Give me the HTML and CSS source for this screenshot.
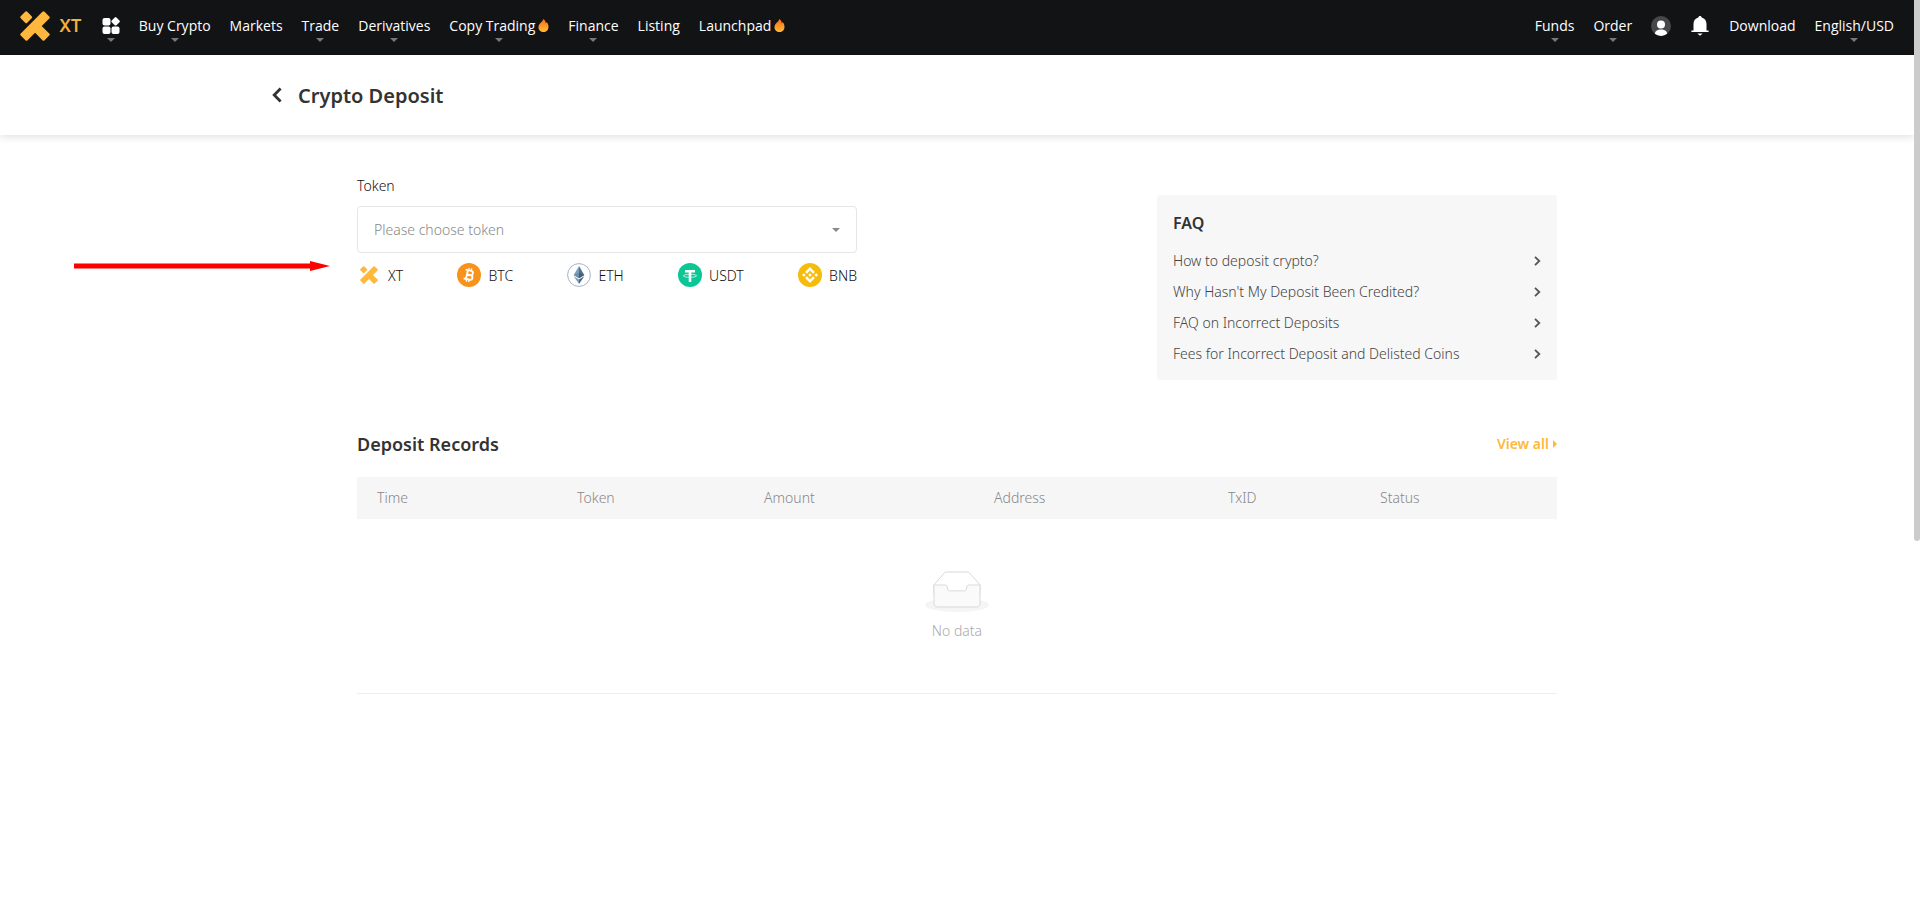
FILE: index.html
```html
<!DOCTYPE html>
<html lang="en">
<head>
<meta charset="utf-8">
<title>Crypto Deposit</title>
<link rel="stylesheet" href="styles.css">
</head>
<body>
<svg class="defs" width="0" height="0" aria-hidden="true">
  <defs>
    <linearGradient id="flame-fill" x1="0" y1="0" x2="0" y2="1">
      <stop offset="0" stop-color="#ff6a0d"/><stop offset="1" stop-color="#ffbe3d"/>
    </linearGradient>
  </defs>
  <symbol id="xt" viewBox="0 0 30 30">
    <g fill="#ffb83d" stroke="#ffb83d" stroke-width="3" stroke-linejoin="round">
      <path d="M23.5 1.8 28.2 6.5 6.5 28.2 1.8 23.5z"/>
      <path d="M6.2 1.8 10.6 6.2 6.2 10.6 1.8 6.2z"/>
      <path d="M18.500 14 28.2 23.5 23.5 28.2 14 18.500z"/>
    </g>
  </symbol>
  <symbol id="flame" viewBox="0 0 10 13">
    <path fill="url(#flame-fill)" d="M4.600 0C7 1.500 7.300 3 7.300 4.300 7.800 4.100 8.100 3.600 8.200 3.100 9.300 4.500 10 6.200 10 8 10 11 7.700 13 5 13S0 11 0 8.200C0 6 1.200 4.700 2.400 3.500 3.600 2.400 4.500 1.500 4.600 0z"/>
  </symbol>
  <symbol id="chev" viewBox="0 0 7 10"><path d="M1 .8 5.300 5 1 9.200" fill="none" stroke="#555" stroke-width="1.800"/></symbol>
</svg>

<header class="topbar">
  <a class="brand" href="#"><svg class="brand-mark"><use href="#xt"/></svg><span>XT</span></a>
  <nav class="menu" aria-label="Main">
    <button class="item drop" aria-label="Products"><svg width="18" height="18" viewBox="0 0 18 18" fill="#fff"><rect x="0.500" y="1" width="8" height="7.500" rx="2"/><rect x="0.500" y="9.500" width="8" height="7.500" rx="2"/><rect x="9.500" y="9.500" width="8" height="7.500" rx="2"/><path d="M13.600 1.300 16.600 4.300 13.600 7.300 10.600 4.300z" stroke="#fff" stroke-width="2.400" stroke-linejoin="round"/></svg></button>
    <button class="item drop">Buy Crypto</button>
    <a class="item" href="#">Markets</a>
    <button class="item drop">Trade</button>
    <button class="item drop">Derivatives</button>
    <button class="item drop">Copy Trading<svg class="flame"><use href="#flame"/></svg></button>
    <button class="item drop">Finance</button>
    <a class="item" href="#">Listing</a>
    <a class="item" href="#">Launchpad<svg class="flame"><use href="#flame"/></svg></a>
  </nav>
  <nav class="menu menu-user" aria-label="Account">
    <button class="item drop">Funds</button>
    <button class="item drop">Order</button>
    <button class="item" aria-label="Profile"><svg width="20" height="20" viewBox="0 0 20 20"><circle cx="10" cy="10" r="10" fill="#474849"/><circle cx="10" cy="8.500" r="4" fill="#fff"/><path d="M3.800 17.800C4.200 14.800 7 13.600 10 13.600s5.800 1.200 6.200 4.200A10 10 0 0 1 3.800 17.800z" fill="#fff"/></svg></button>
    <button class="item" aria-label="Notifications"><svg width="20" height="20" viewBox="0 0 20 20" fill="#fff"><path d="M10 0c.9 0 1.600.6 1.700 1.500C14.800 2.300 16.500 4.800 16.500 8v6.500H18.600V16H1.400v-1.500H3.500V8c0-3.200 1.700-5.700 4.800-6.500C8.400.6 9.100 0 10 0zM7.300 17.600h5.400L10 19.800z"/></svg></button>
    <a class="item" href="#">Download</a>
    <button class="item drop">English/USD</button>
  </nav>
</header>

<div class="titlebar">
  <div class="title-inner">
    <a class="back" href="#" aria-label="Back"><svg width="10" height="16" viewBox="0 0 10 16"><path d="M8.600 1.500 2.200 8 8.600 14.500" fill="none" stroke="#333" stroke-width="2.800"/></svg></a>
    <h1>Crypto Deposit</h1>
  </div>
</div>

<main class="page">
  <div class="top">
    <section class="token">
      <label for="token">Token</label>
      <div class="select-wrap">
        <select id="token"><option>Please choose token</option></select>
      </div>
      <div class="coins">
        <button><svg class="coin" viewBox="0 0 24 24"><use href="#xt" x="3" y="3" width="18" height="18"/></svg><span>XT</span></button>
        <button><svg class="coin" viewBox="0 0 24 24"><circle cx="12" cy="12" r="12" fill="#f7931a"/><g transform="rotate(13 12 12)" fill="none" stroke="#fff" stroke-width="1.900"><path d="M7.500 7.500h5.700a2.200 2.200 0 0 1 0 4.400H9.700M9.700 11.900h4a2.300 2.300 0 0 1 0 4.600H7.500M9.900 7.500v9"/><path d="M10.700 5V7M13.200 5V7M10.700 17v2M13.200 17v2" stroke-width="1.300"/></g></svg><span>BTC</span></button>
        <button><svg class="coin" viewBox="0 0 24 24"><circle cx="12" cy="12" r="11.400" fill="#fff" stroke="#a3b4c6"/><path d="M12 3 6.700 12 12 15.200z" fill="#7f9fb9"/><path d="M12 3 17.300 12 12 15.200z" fill="#54728e"/><path d="M12 9.600 6.700 12 12 15.200z" fill="#6d8ead"/><path d="M12 9.600 17.300 12 12 15.200z" fill="#42607d"/><path d="M6.700 13.200 12 16.400V21z" fill="#7f9fb9"/><path d="M17.300 13.200 12 16.400V21z" fill="#486682"/></svg><span>ETH</span></button>
        <button><svg class="coin" viewBox="0 0 24 24"><circle cx="12" cy="12" r="12" fill="#0ac795"/><path d="M7 7h10v2.600h-3.700V19h-2.600V9.600H7z" fill="#fff"/><ellipse cx="12" cy="12.800" rx="6.700" ry="1.500" fill="none" stroke="#fff" stroke-width=".7"/></svg><span>USDT</span></button>
        <button><svg class="coin" viewBox="0 0 24 24"><circle cx="12" cy="12" r="12" fill="#f5bc0c"/><g fill="#fff"><path d="m12 4 4.900 4.900-1.800 1.800L12 7.600l-3.100 3.100-1.800-1.800zM12 20l-4.900-4.900 1.800-1.800 3.100 3.100 3.100-3.100 1.800 1.800zM5.800 10.200 7.600 12l-1.800 1.800L4 12zM18.200 10.200 20 12l-1.800 1.800-1.800-1.800zM12 10.200l1.800 1.800-1.800 1.800-1.800-1.800z"/></g></svg><span>BNB</span></button>
      </div>
    </section>
    <aside class="faq">
      <h2>FAQ</h2>
      <a href="#">How to deposit crypto?<svg class="chev"><use href="#chev"/></svg></a>
      <a href="#">Why Hasn't My Deposit Been Credited?<svg class="chev"><use href="#chev"/></svg></a>
      <a href="#">FAQ on Incorrect Deposits<svg class="chev"><use href="#chev"/></svg></a>
      <a href="#">Fees for Incorrect Deposit and Delisted Coins<svg class="chev"><use href="#chev"/></svg></a>
    </aside>
  </div>

  <section>
    <div class="records-head">
      <h2>Deposit Records</h2>
      <a class="view-all" href="#">View all<svg width="4" height="8" viewBox="0 0 4 8"><path d="M0 0 4 4 0 8z" fill="#ffb83d"/></svg></a>
    </div>
    <table class="records">
      <colgroup><col class="c-time"><col class="c-token"><col class="c-amount"><col class="c-address"><col class="c-txid"><col></colgroup>
      <thead><tr><th>Time</th><th>Token</th><th>Amount</th><th>Address</th><th>TxID</th><th>Status</th></tr></thead>
      <tbody><tr><td colspan="6">
        <svg class="empty" width="64" height="41" viewBox="0 0 64 41"><g transform="translate(0 1)" fill="none"><ellipse fill="#f5f5f5" cx="32" cy="33" rx="32" ry="7"/><g stroke="#d9d9d9"><path d="M55 12.760 44.854 1.258C44.367.474 43.656 0 42.907 0H21.093c-.749 0-1.460.474-1.947 1.257L9 12.761V22h46v-9.240z" fill="#fff"/><path d="M41.613 15.931c0-1.605.994-2.930 2.227-2.931H55v18.137C55 33.260 53.680 35 52.050 35h-40.100C10.320 35 9 33.259 9 31.137V13h11.160c1.233 0 2.227 1.323 2.227 2.928v.022c0 1.605 1.005 2.901 2.237 2.901h14.752c1.232 0 2.237-1.308 2.237-2.913v-.007z" fill="#fafafa"/></g></g></svg>
        <p>No data</p>
      </td></tr></tbody>
    </table>
  </section>
</main>

<svg class="pointer" width="256" height="10" viewBox="0 0 256 10" aria-hidden="true"><path d="M0 2.500H236V0L256 5 236 10V7.500H0z" fill="#f00"/></svg>
<div class="scroll-thumb" aria-hidden="true"></div>
</body>
</html>
```
FILE: styles.css
```css
* { box-sizing: border-box; }

body {
  margin: 0;
  padding-right: 6px;
  background: #fff;
  color: #333;
  font: 300 14px/20px "Noto Sans", sans-serif;
}

h1, h2, p { margin: 0; }
a { color: inherit; text-decoration: none; }
button {
  padding: 0;
  border: 0;
  background: none;
  color: inherit;
  font: inherit;
  cursor: pointer;
}
svg { display: block; flex: none; }
.defs { position: absolute; }

/* Top bar */
.topbar {
  display: flex;
  align-items: center;
  height: 55px;
  margin-right: -6px;
  padding: 0 26px 4px 20px;
  background: #121315;
  color: #fff;
  font-family: "Open Sans", sans-serif;
  font-weight: 500;
}
.brand {
  display: flex;
  align-items: center;
  gap: 9px;
  margin-right: 20px;
  color: #f3b13e;
  font: 600 17px/24px Inter, sans-serif;
}
.brand-mark { width: 30px; height: 30px; }
.menu { display: flex; gap: 19px; }
.menu-user { margin-left: auto; }
.item {
  position: relative;
  display: flex;
  align-items: center;
  height: 20px;
  gap: 3px;
}
.flame { width: 11px; height: 13px; }
.drop::after {
  content: "";
  position: absolute;
  top: 22px;
  left: 50%;
  margin-left: -4px;
  border: 4px solid transparent;
  border-top-color: #77787a;
  border-bottom: 0;
}

/* Title bar */
.titlebar {
  padding: 0 20px;
  box-shadow: 0 2px 8px rgba(0, 0, 0, .12);
}
.title-inner {
  display: flex;
  align-items: center;
  gap: 16px;
  max-width: 1370px;
  height: 80px;
  margin: 0 auto;
}
h1 { padding-top: 2px; font-size: 20px; line-height: 28px; font-weight: 600; }

/* Page */
.page { max-width: 1200px; margin: 0 auto; }
.top {
  display: flex;
  justify-content: space-between;
  align-items: flex-end;
  padding-top: 41px;
}
.token { width: 500px; align-self: flex-start; }
.token label { display: block; line-height: 20px; color: #111; }
.select-wrap { position: relative; margin-top: 10px; }
.select-wrap::after {
  content: "";
  position: absolute;
  top: 22px;
  right: 17px;
  border: 4px solid transparent;
  border-top-color: #8a8a8a;
  border-bottom: 0;
  pointer-events: none;
}
select {
  display: block;
  width: 100%;
  height: 47px;
  padding: 0 16px;
  border: 1px solid #e6e6e6;
  border-radius: 4px;
  background: #fff;
  color: #888;
  font: inherit;
  appearance: none;
}
.coins {
  display: flex;
  justify-content: space-between;
  margin-top: 10px;
  color: #111;
}
.coins button { display: flex; align-items: center; gap: 7px; height: 24px; }
.coins span { padding-top: 2px; }
.coin { width: 24px; height: 24px; }

.faq {
  width: 400px;
  margin-top: 19px;
  padding: 16px 16px 11px;
  border-radius: 3px;
  background: #f7f7f7;
}
.faq h2 { margin-bottom: 10px; font-size: 16px; line-height: 24px; font-weight: 600; }
.faq a {
  display: flex;
  align-items: center;
  justify-content: space-between;
  height: 31px;
  color: #444;
}
.chev { width: 7px; height: 10px; }

/* Records */
.records-head {
  display: flex;
  align-items: center;
  justify-content: space-between;
  height: 28px;
  margin: 50px 0 19px;
}
.records-head h2 { font-size: 18px; line-height: 28px; font-weight: 600; }
.view-all {
  display: flex;
  align-items: center;
  gap: 4px;
  color: #ffb83d;
  font-weight: 600;
}
.records { width: 100%; border-collapse: collapse; table-layout: fixed; }
.c-time { width: 200px; }
.c-token { width: 187px; }
.c-amount { width: 230px; }
.c-address { width: 234px; }
.c-txid { width: 152px; }
.records th {
  height: 42px;
  padding: 0 20px;
  background: #f6f6f6;
  color: #888;
  font-weight: 300;
  text-align: left;
}
.records td {
  padding: 52px 16px 52px;
  border-bottom: 1px solid #eee;
  color: #aaa;
  text-align: center;
}
.empty { margin: 0 auto 9px; }

/* Overlays */
.pointer { position: absolute; top: 261px; left: 74px; }
.scroll-thumb {
  position: fixed;
  top: 0;
  right: 0;
  width: 6px;
  height: 541px;
  border-radius: 0 0 3px 3px;
  background: #ccc;
}
```
